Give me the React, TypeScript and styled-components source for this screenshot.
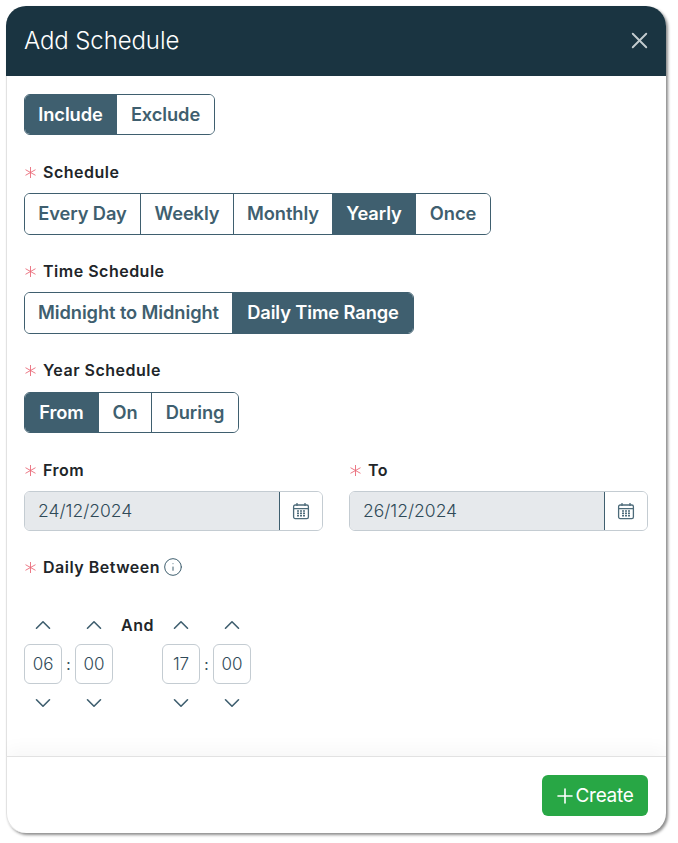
import React from 'react';
import styled, { createGlobalStyle } from 'styled-components';
import { ChevronUp, ChevronDown, X, Plus, Info } from 'lucide-react';

const Global = createGlobalStyle`
  html, body { margin: 0; padding: 0; background: #fff; }
  body { font-family: Inter, "Liberation Sans", sans-serif; }
`;

const Page = styled.div`
  width: 678px;
  height: 843px;
  padding: 6px 12px 10px 6px;
  box-sizing: border-box;
`;

const Modal = styled.div`
  width: 660px;
  height: 827px;
  border-radius: 20px;
  background: #fff;
  overflow: hidden;
  display: flex;
  flex-direction: column;
  box-shadow: 2px 2px 3px rgba(0, 0, 0, 0.45), inset 1px 0 0 #e2e2e2;
`;

const Header = styled.header`
  height: 70px;
  flex: none;
  background: #1a3441;
  color: #fff;
  display: flex;
  align-items: center;
  justify-content: space-between;
  padding: 0 13px 2px 18px;
  box-sizing: border-box;
  font-size: 24px;
  font-weight: 300;
  letter-spacing: -0.1px;
`;

const CloseButton = styled.span`
  display: flex;
  color: #c3cbcf;
`;

const Body = styled.div`
  flex: 1;
  padding: 18px 18px 0;
  display: flex;
  flex-direction: column;
`;

const Field = styled.div<{ $gap?: number }>`
  margin-top: ${({ $gap }) => $gap ?? 27}px;
`;

const Label = styled.div<{ $below?: number }>`
  display: flex;
  align-items: center;
  height: 20px;
  margin-bottom: ${({ $below }) => $below ?? 11}px;
  font-size: 16px;
  font-weight: 600;
  letter-spacing: 0.5px;
  color: #212529;
`;

const Star = styled.span`
  display: inline-flex;
  width: 19px;
  flex: none;
  color: #ea6a78;
`;

const Segments = styled.div<{ $height?: number }>`
  display: flex;
  width: fit-content;
  height: ${({ $height }) => $height ?? 41}px;
  border: 1px solid #3f5f6f;
  border-radius: 6px;
  overflow: hidden;
  box-sizing: border-box;
`;

const Segment = styled.div<{ $active?: boolean; $width: number }>`
  display: flex;
  align-items: center;
  justify-content: center;
  width: ${({ $width }) => $width}px;
  box-sizing: border-box;
  padding-bottom: 2px;
  font-size: 18.3px;
  font-weight: 600;
  letter-spacing: -0.1px;
  white-space: nowrap;
  color: ${({ $active }) => ($active ? '#fff' : '#3f5f6f')};
  background: ${({ $active }) => ($active ? '#3f5f6f' : '#fff')};
  & + & {
    border-left: 1px solid #3f5f6f;
  }
`;

const DateRow = styled.div`
  display: grid;
  grid-template-columns: 299px 299px;
  column-gap: 26px;
`;

const DateInput = styled.div`
  display: flex;
  height: 40px;
  border: 1px solid #c4ccd2;
  border-radius: 6px;
  overflow: hidden;
  box-sizing: border-box;
`;

const DateValue = styled.div`
  flex: 1;
  display: flex;
  align-items: center;
  padding: 0 0 1px 13px;
  background: #e6e9ec;
  color: #2f4a58;
  font-size: 17.5px;
  font-weight: 300;
`;

const DateIcon = styled.div`
  width: 43px;
  flex: none;
  box-sizing: border-box;
  display: flex;
  align-items: center;
  justify-content: center;
  border-left: 1px solid #3f5f6f;
  background: #fff;
`;

const InfoIcon = styled.span`
  display: inline-flex;
  margin-left: 3px;
  color: #3f5f6f;
`;

const TimeRow = styled.div`
  display: flex;
  align-items: flex-start;
  margin-top: 38px;
`;

const Spinner = styled.div`
  width: 38px;
  display: flex;
  flex-direction: column;
  align-items: center;
  color: #3f5f6f;
`;

const Arrow = styled.span`
  display: flex;
  height: 20px;
  align-items: center;
`;

const TimeBox = styled.div`
  width: 38px;
  height: 40px;
  margin: 9px 0;
  border: 1px solid #c4ccd2;
  border-radius: 6px;
  box-sizing: border-box;
  display: flex;
  align-items: center;
  justify-content: center;
  font-size: 17px;
  font-weight: 300;
  color: #2f4a58;
`;

const Colon = styled.div`
  width: 13px;
  height: 40px;
  margin-top: 29px;
  display: flex;
  align-items: center;
  justify-content: center;
  font-size: 15px;
  color: #2f4a58;
`;

const AndLabel = styled.div`
  width: 49px;
  height: 20px;
  text-align: center;
  font-size: 16px;
  font-weight: 600;
  letter-spacing: 0.5px;
  color: #212529;
`;

const Footer = styled.footer`
  height: 77px;
  flex: none;
  border-top: 1px solid #e2e2e2;
  box-shadow: 0 -8px 16px rgba(0, 0, 0, 0.03);
  box-sizing: border-box;
  display: flex;
  justify-content: flex-end;
  padding: 18px 18px 0 0;
`;

const CreateButton = styled.div`
  width: 106px;
  height: 41px;
  padding-right: 4px;
  box-sizing: border-box;
  border-radius: 6px;
  background: #28a745;
  color: #fff;
  display: flex;
  align-items: center;
  justify-content: center;
  font-size: 19px;
  font-weight: 400;
  letter-spacing: -0.3px;
  svg {
    margin-right: -1px;
  }
`;

const StarIcon = () => (
  <svg width="13" height="13" viewBox="0 0 13 13" fill="none" stroke="currentColor" strokeWidth="0.9">
    <path d="M6.5 1v11M1.5 3.7l10 5.6M11.5 3.7l-10 5.6" />
  </svg>
);

const CalendarIcon = () => (
  <svg width="18" height="18" viewBox="0 0 18 18" fill="none" stroke="#4d6b7a" strokeWidth="1.3">
    <rect x="1.6" y="3" width="14.8" height="13.6" rx="1.6" />
    <path d="M1.6 6.6h14.8M5 1v3M13 1v3" />
    <path d="M5 9h2M8 9h2M11 9h2M5 11.4h2M8 11.4h2M11 11.4h2M5 13.8h2M8 13.8h2M11 13.8h2" strokeWidth="1.6" />
  </svg>
);

type Option = { label: string; width: number };

const Group: React.FC<{ options: Option[]; active: string; height?: number }> = ({ options, active, height }) => (
  <Segments $height={height}>
    {options.map((o) => (
      <Segment key={o.label} $width={o.width} $active={o.label === active}>{o.label}</Segment>
    ))}
  </Segments>
);

const FieldLabel: React.FC<{ children: React.ReactNode; below?: number }> = ({ children, below }) => (
  <Label $below={below}>
    <Star><StarIcon /></Star>
    {children}
  </Label>
);

const TimeSpinner: React.FC<{ value: string }> = ({ value }) => (
  <Spinner>
    <Arrow><ChevronUp size={26} strokeWidth={1.5} /></Arrow>
    <TimeBox>{value}</TimeBox>
    <Arrow><ChevronDown size={26} strokeWidth={1.5} /></Arrow>
  </Spinner>
);

const App: React.FC = () => (
  <Page>
    <Global />
    <Modal>
      <Header>
        Add Schedule
        <CloseButton><X size={27} strokeWidth={1.7} /></CloseButton>
      </Header>
      <Body>
        <Group
          options={[{ label: 'Include', width: 91 }, { label: 'Exclude', width: 98 }]}
          active="Include"
        />
        <Field>
          <FieldLabel>Schedule</FieldLabel>
          <Group
            height={42}
            options={[
              { label: 'Every Day', width: 115 },
              { label: 'Weekly', width: 93 },
              { label: 'Monthly', width: 99 },
              { label: 'Yearly', width: 83 },
              { label: 'Once', width: 75 },
            ]}
            active="Yearly"
          />
        </Field>
        <Field $gap={26}>
          <FieldLabel>Time Schedule</FieldLabel>
          <Group
            height={42}
            options={[{ label: 'Midnight to Midnight', width: 207 }, { label: 'Daily Time Range', width: 181 }]}
            active="Daily Time Range"
          />
        </Field>
        <Field $gap={26}>
          <FieldLabel below={12}>Year Schedule</FieldLabel>
          <Group
            options={[{ label: 'From', width: 73 }, { label: 'On', width: 53 }, { label: 'During', width: 87 }]}
            active="From"
          />
        </Field>
        <Field>
          <DateRow>
            <div>
              <FieldLabel>From</FieldLabel>
              <DateInput>
                <DateValue>24/12/2024</DateValue>
                <DateIcon><CalendarIcon /></DateIcon>
              </DateInput>
            </div>
            <div>
              <FieldLabel>To</FieldLabel>
              <DateInput>
                <DateValue>26/12/2024</DateValue>
                <DateIcon><CalendarIcon /></DateIcon>
              </DateInput>
            </div>
          </DateRow>
        </Field>
        <Field $gap={26}>
          <FieldLabel>
            Daily Between
            <InfoIcon><Info size={20} strokeWidth={1.2} /></InfoIcon>
          </FieldLabel>
          <TimeRow>
            <TimeSpinner value="06" />
            <Colon>:</Colon>
            <TimeSpinner value="00" />
            <AndLabel>And</AndLabel>
            <TimeSpinner value="17" />
            <Colon>:</Colon>
            <TimeSpinner value="00" />
          </TimeRow>
        </Field>
      </Body>
      <Footer>
        <CreateButton><Plus size={24} strokeWidth={1.6} />Create</CreateButton>
      </Footer>
    </Modal>
  </Page>
);

export default App;
